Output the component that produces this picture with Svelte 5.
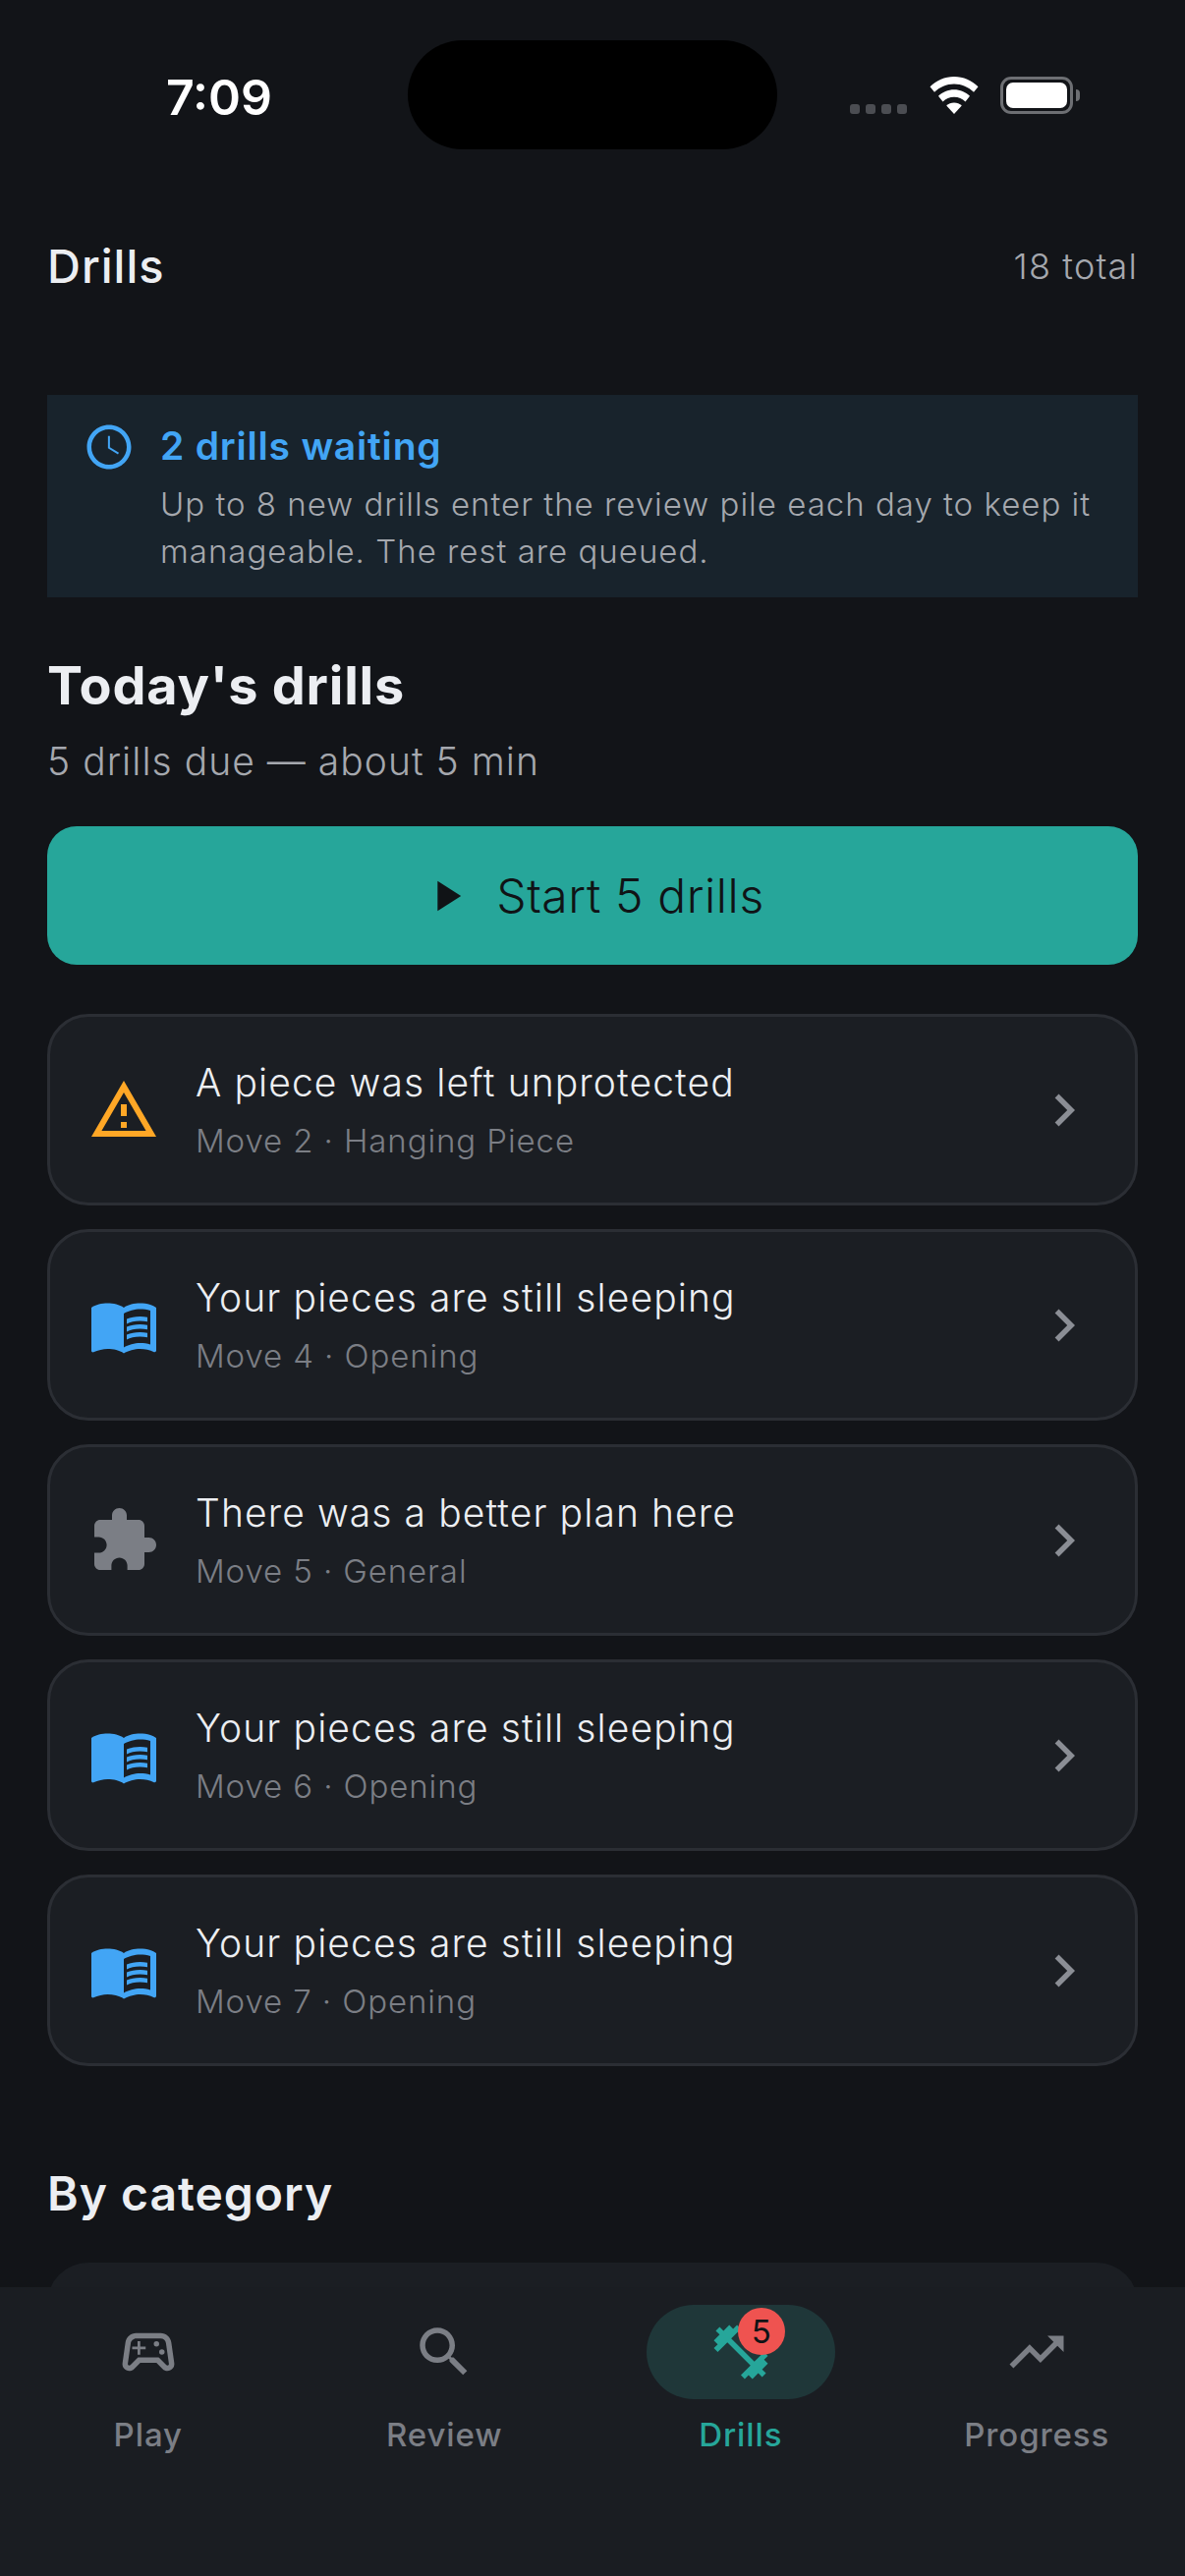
<script>
  const book = ["M21 5c-1.11-.35-2.33-.5-3.5-.5-1.95 0-4.05.4-5.5 1.5-1.45-1.1-3.55-1.5-5.5-1.5S2.45 4.9 1 6v14.65c0 .25.25.5.5.5.1 0 .15-.05.25-.05C3.1 20.45 5.05 20 6.5 20c1.95 0 4.05.4 5.5 1.5 1.35-.85 3.8-1.5 5.5-1.5 1.65 0 3.35.3 4.75 1.05.1.05.15.05.25.05.25 0 .5-.25.5-.5V6c-.6-.45-1.25-.75-2-1zm0 13.5c-1.1-.35-2.3-.5-3.5-.5-1.7 0-4.15.65-5.5 1.5V8c1.35-.85 3.8-1.5 5.5-1.5 1.2 0 2.4.15 3.5.5v11.5z",
    "M17.5 10.5c.88 0 1.73.09 2.5.26V9.24c-.79-.15-1.64-.24-2.5-.24-1.7 0-3.24.29-4.5.83v1.66c1.13-.64 2.7-.99 4.5-.99zM13 12.49v1.66c1.13-.64 2.7-.99 4.5-.99.88 0 1.73.09 2.5.26V11.9c-.79-.15-1.64-.24-2.5-.24-1.7 0-3.24.3-4.5.83zM17.5 14.33c-1.7 0-3.24.29-4.5.83v1.66c1.13-.64 2.7-.99 4.5-.99.88 0 1.73.09 2.5.26v-1.52c-.79-.16-1.64-.24-2.5-.24z"];
  const warn = ["M12 5.99L19.53 19H4.47L12 5.99M12 2L1 21h22L12 2zm1 14h-2v2h2v-2zm0-6h-2v4h2v-4z"];
  const puzzle = ["M20.5 11H19V7c0-1.1-.9-2-2-2h-4V3.5C13 2.12 11.88 1 10.5 1S8 2.12 8 3.5V5H4c-1.1 0-1.99.9-1.99 2v3.8H3.5c1.49 0 2.7 1.21 2.7 2.7s-1.21 2.7-2.7 2.7H2V20c0 1.1.9 2 2 2h3.8v-1.5c0-1.49 1.21-2.7 2.7-2.7 1.49 0 2.7 1.21 2.7 2.7V22H17c1.1 0 2-.9 2-2v-4h1.5c1.38 0 2.5-1.12 2.5-2.5S21.88 11 20.5 11z"];
  const drills = [
    { icon: warn, color: '#ffa726', title: 'A piece was left unprotected', sub: 'Move 2 · Hanging Piece' },
    { icon: book, color: '#42a5f5', title: 'Your pieces are still sleeping', sub: 'Move 4 · Opening' },
    { icon: puzzle, color: '#7b7e85', title: 'There was a better plan here', sub: 'Move 5 · General' },
    { icon: book, color: '#42a5f5', title: 'Your pieces are still sleeping', sub: 'Move 6 · Opening' },
    { icon: book, color: '#42a5f5', title: 'Your pieces are still sleeping', sub: 'Move 7 · Opening' }
  ];
</script>

<div class="page">
  <div class="status">
    <span class="time">7:09</span>
    <div class="island"></div>
    <div class="status-right">
      <div class="dots"><i></i><i></i><i></i><i></i></div>
      <svg class="wifi" width="50" height="38" viewBox="0 0 50 36" preserveAspectRatio="none">
        <path fill="#fff" d="M25 0C15.5 0 7 3.6.5 9.6L5 15C10.3 10.200 17.300 7.200 25 7.200S39.700 10.200 45 15l4.500-5.400C43 3.600 34.500 0 25 0z"/>
        <path fill="#fff" d="M25 12.500c-6.200 0-11.800 2.300-16 6.200l4.500 5.400c3-2.800 7-4.500 11.500-4.500s8.500 1.700 11.500 4.500l4.500-5.400c-4.200-3.900-9.800-6.200-16-6.200z"/>
        <path fill="#fff" d="M25 25c-3 0-5.700 1.100-7.800 3L25 36l7.800-8c-2.100-1.900-4.800-3-7.800-3z"/>
      </svg>
      <div class="battery"><div class="fill"></div></div>
      <div class="nub"></div>
    </div>
  </div>

  <header class="bar">
    <h1>Drills</h1>
    <span class="total">18 total</span>
  </header>

  <section class="banner">
    <svg class="clock" viewBox="0 0 24 24" fill="#42a5f5">
      <path d="M11.990 2C6.470 2 2 6.480 2 12s4.470 10 9.990 10C17.520 22 22 17.520 22 12S17.520 2 11.990 2zM12 20c-4.420 0-8-3.580-8-8s3.580-8 8-8 8 3.580 8 8-3.580 8-8 8z"/>
      <path d="M12.400 7H11.500v5.600l4.500 2.700.45-.75-4.050-2.400z"/>
    </svg>
    <div>
      <div class="banner-title">2 drills waiting</div>
      <p>Up to 8 new drills enter the review pile each day to keep it manageable. The rest are queued.</p>
    </div>
  </section>

  <h2>Today's drills</h2>
  <div class="due">5 drills due — about 5 min</div>

  <button class="start">
    <svg width="52" height="52" viewBox="0 0 24 24"><path fill="#101316" d="M8 5v14l11-7z"/></svg>
    <span>Start 5 drills</span>
  </button>

  <div class="list">
    {#each drills as d}
      <div class="card">
        <svg class="icon" viewBox="0 0 24 24" fill={d.color}>
          {#each d.icon as p}<path d={p}/>{/each}
        </svg>
        <div class="text">
          <div class="title">{d.title}</div>
          <div class="sub">{d.sub}</div>
        </div>
        <svg class="chev" viewBox="0 0 24 24" fill="#8b8e95"><path d="M10 6L8.590 7.410 13.170 12l-4.580 4.590L10 18l6-6z"/></svg>
      </div>
    {/each}
  </div>

  <h3>By category</h3>
  <div class="cat"></div>

  <nav>
    <div class="tab">
      <div class="pill">
        <svg class="nav-icon" viewBox="0 0 24 24" fill="#7b7e85">
          <path d="M21.580 16.090l-1.090-7.660C20.210 6.460 18.520 5 16.530 5H7.470C5.480 5 3.790 6.460 3.510 8.430l-1.090 7.660C2.200 17.630 3.390 19 4.940 19c.68 0 1.320-.27 1.800-.75L9 16h6l2.250 2.250c.48.48 1.130.75 1.800.75 1.560 0 2.750-1.370 2.530-2.910zm-2.100.72c-.08.09-.21.19-.43.19-.15 0-.29-.06-.39-.16L15.830 14H8.170l-2.830 2.840c-.1.1-.24.16-.39.16-.22 0-.35-.1-.43-.19-.08-.09-.16-.24-.13-.46l1.090-7.660C5.620 7.890 6.480 7 7.470 7h9.060c.99 0 1.850.74 1.980 1.720l1.090 7.660c.03.21-.05.37-.12.43z"/>
          <path d="M9 8H8v2H6v1h2v2h1v-2h2v-1H9z"/>
          <circle cx="15" cy="9" r="1"/><circle cx="17" cy="12" r="1"/>
        </svg>
      </div>
      <span>Play</span>
    </div>
    <div class="tab">
      <div class="pill">
        <svg class="nav-icon" viewBox="0 0 24 24" fill="#7b7e85"><path d="M15.500 14h-.79l-.28-.27C15.410 12.590 16 11.110 16 9.500 16 5.910 13.090 3 9.500 3S3 5.910 3 9.500 5.910 16 9.500 16c1.610 0 3.090-.59 4.230-1.570l.27.28v.79l5 4.990L20.490 19l-4.990-5zm-6 0C7.010 14 5 11.990 5 9.500S7.010 5 9.500 5 14 7.010 14 9.500 11.990 14 9.500 14z"/></svg>
      </div>
      <span>Review</span>
    </div>
    <div class="tab active">
      <div class="pill">
        <svg class="nav-icon" viewBox="0 0 24 24" fill="#26a69a"><path d="M20.570 14.860L22 13.430 20.570 12 17 15.570 8.430 7 12 3.430 10.570 2 9.140 3.430 7.710 2 5.570 4.140 4.140 2.710 2.710 4.140l1.430 1.430L2 7.710l1.430 1.430L2 10.570 3.430 12 7 8.430 15.570 17 12 20.570 13.430 22l1.430-1.430L16.290 22l2.140-2.140 1.430 1.430 1.430-1.430-1.430-1.430L22 16.290z"/></svg>
        <b class="badge">5</b>
      </div>
      <span>Drills</span>
    </div>
    <div class="tab">
      <div class="pill">
        <svg class="nav-icon" viewBox="0 0 24 24" fill="#7b7e85"><path d="M16 6l2.290 2.290-4.880 4.880-4-4L2 16.590 3.410 18l6-6 4 4 6.300-6.290L22 12V6z"/></svg>
      </div>
      <span>Progress</span>
    </div>
  </nav>
</div>

<style>
  :global(body) { margin: 0; background: #121418; }
  .page {
    position: relative;
    width: 1206px;
    height: 2622px;
    overflow: hidden;
    background: #121418;
    font-family: Inter, "Noto Sans", sans-serif;
    color: #eceef2;
    box-sizing: border-box;
    padding: 41px 48px 0;
  }
  .status { display: flex; align-items: flex-start; height: 111px; }
  .time { width: 367px; padding-left: 121px; box-sizing: border-box; margin-top: 23px; font-size: 50px; line-height: 70px; font-weight: 600; color: #fff; }
  .island { width: 376px; height: 111px; border-radius: 56px; background: #000; flex: none; }
  .status-right { display: flex; align-items: flex-start; margin-left: 74px; padding-top: 36px; }
  .dots { display: flex; gap: 6px; margin-top: 29px; }
  .dots i { width: 10px; height: 10px; border-radius: 3px; background: #4b4d52; }
  .wifi { margin-left: 23px; margin-top: 1px; }
  .battery { margin-left: 22px; margin-top: 1px; width: 74px; height: 38px; box-sizing: border-box; border: 3px solid #6d6f73; border-radius: 11px; padding: 3px; }
  .fill { height: 100%; background: #fff; border-radius: 7px; }
  .nub { width: 4px; height: 12px; margin: 14px 0 0 3px; background: #6d6f73; border-radius: 0 4px 4px 0; }

  .bar { display: flex; justify-content: space-between; align-items: center; height: 70px; margin-top: 84px; }
  h1 { margin: 0; font-size: 47px; font-weight: 500; line-height: 70px; letter-spacing: 1px; }
  .total { font-size: 36px; font-weight: 300; color: #a5a8ae; letter-spacing: 1.15px; }

  .banner { display: flex; gap: 25px; margin-top: 96px; height: 206px; box-sizing: border-box; padding: 26px 36px 0; background: #18232c; }
  .clock { width: 54px; height: 54px; flex: none; }
  .banner-title { font-size: 39px; font-weight: 600; color: #42a5f5; line-height: 54px; letter-spacing: .8px; margin-top: -1px; }
  .banner p { margin: 8px 0 0; font-size: 33px; font-weight: 300; line-height: 48px; color: #a5a8ae; letter-spacing: 1px; }

  h2 { margin: 56px 0 0; font-size: 54px; line-height: 68px; font-weight: 700; letter-spacing: .75px; }
  .due { margin-top: 15px; font-size: 39px; font-weight: 300; line-height: 56px; color: #a5a8ae; letter-spacing: 1.03px; }

  .start { display: flex; align-items: center; justify-content: center; gap: 25px; width: 100%; height: 141px; margin-top: 38px; border: 0; border-radius: 30px; background: #26a69a; color: #101316; font-family: inherit; font-size: 48px; font-weight: 300; letter-spacing: .6px; padding: 0; }

  .list { display: flex; flex-direction: column; gap: 24px; margin-top: 50px; }
  .card { display: flex; align-items: center; height: 195px; box-sizing: border-box; padding: 0 39px; border: 3px solid #2b2e34; border-radius: 42px; background: #1b1e23; }
  .icon { width: 72px; height: 72px; flex: none; }
  .text { flex: 1; margin-left: 37px; }
  .title { font-size: 39px; font-weight: 300; line-height: 54px; letter-spacing: 1.1px; color: #eceef2; }
  .sub { margin-top: 9px; font-size: 33px; font-weight: 300; line-height: 46px; color: #7b7e85; letter-spacing: .9px; }
  .chev { width: 66px; height: 66px; flex: none; }

  h3 { margin: 98px 0 0; font-size: 48px; line-height: 64px; font-weight: 600; letter-spacing: 1px; }
  .cat { height: 200px; margin-top: 38px; border-radius: 42px; background: #1b1e23; }

  nav { position: absolute; left: 0; right: 0; bottom: 0; height: 294px; display: grid; grid-template-columns: repeat(4, 1fr); background: #1a1d22; align-items: start; padding-top: 18px; box-sizing: border-box; }
  .tab { display: flex; flex-direction: column; align-items: center; color: #7b7e85; }
  .tab span { margin-top: 13px; font-size: 33px; line-height: 46px; font-weight: 500; letter-spacing: .9px; }
  .pill { position: relative; width: 192px; height: 96px; border-radius: 48px; display: flex; align-items: center; justify-content: center; }
  .active .pill { background: #1f3739; }
  .active { color: #26a69a; }
  .nav-icon { width: 66px; height: 66px; }
  .badge { position: absolute; left: 93px; top: 3px; width: 48px; height: 48px; border-radius: 50%; background: #ef5350; color: #101316; font-size: 33px; font-weight: 400; line-height: 48px; text-align: center; }
</style>
